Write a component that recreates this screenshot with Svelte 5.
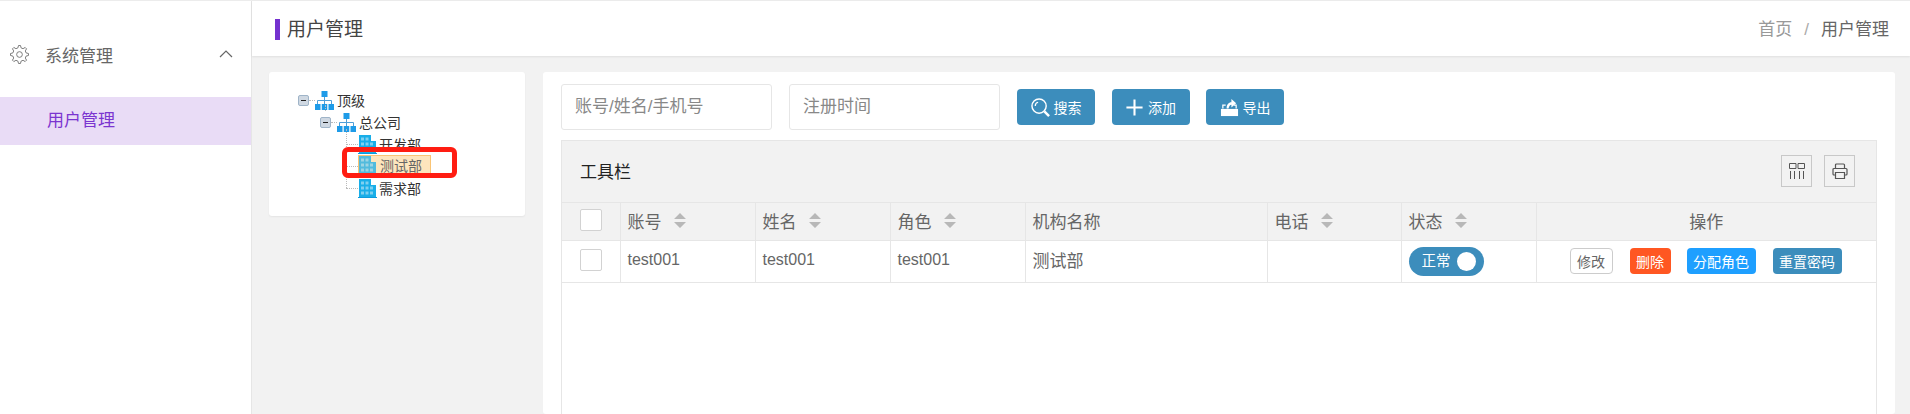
<script>
	const columns = [
		{ label: '账号', value: 'test001', width: 135, sort: true },
		{ label: '姓名', value: 'test001', width: 135, sort: true },
		{ label: '角色', value: 'test001', width: 135, sort: true },
		{ label: '机构名称', value: '测试部', width: 242, sort: false },
		{ label: '电话', value: '', width: 134, sort: true }
	];

	// 8-tooth gear outline, easier to compute than to write by hand
	function gearPath(teeth = 8, outer = 11.4, inner = 8.6) {
		const pts = [];
		const step = (Math.PI * 2) / teeth;
		for (let i = 0; i < teeth; i++) {
			const a = i * step - Math.PI / 2;
			const spread = [
				[a - step * 0.3, inner],
				[a - step * 0.14, outer],
				[a + step * 0.14, outer],
				[a + step * 0.3, inner]
			];
			for (const [ang, r] of spread) {
				pts.push(`${(12 + Math.cos(ang) * r).toFixed(2)} ${(12 + Math.sin(ang) * r).toFixed(2)}`);
			}
		}
		return 'M' + pts.join('L') + 'Z';
	}
</script>

{#snippet orgIcon()}
	<svg class="tree-icon" viewBox="0 0 19 19">
		<rect x="6.500" y="0" width="6" height="6" fill="#1e9be8" />
		<path d="M9.500 6v7M2.500 13v-3.500h14V13" fill="none" stroke="#4f9fd8" stroke-width="1" />
		<rect x="0" y="13" width="5.500" height="6" fill="#1e9be8" />
		<rect x="6.750" y="13" width="5.500" height="6" fill="#1e9be8" />
		<rect x="13.500" y="13" width="5.500" height="6" fill="#1e9be8" />
	</svg>
{/snippet}

{#snippet buildingIcon()}
	<svg class="tree-icon" viewBox="0 0 19 19">
		<path d="M1 18V0h12v6h5v12z" fill="#19aee8" />
		<path d="M0 18.500h19" stroke="#0d9bdc" stroke-width="1" />
		<g fill="#7fd0f0">
			<rect x="3" y="2.500" width="3" height="3" /><rect x="7.500" y="2.500" width="3" height="3" />
			<rect x="3" y="7.500" width="3" height="3" /><rect x="7.500" y="7.500" width="3" height="3" /><rect x="12" y="7.500" width="3" height="3" />
			<rect x="3" y="12.500" width="3" height="3" /><rect x="7.500" y="12.500" width="3" height="3" /><rect x="12" y="12.500" width="3" height="3" />
		</g>
	</svg>
{/snippet}

{#snippet sortArrows()}
	<svg class="sort" viewBox="0 0 12 15"><path d="M6 0l6 6H0zM6 15L0 9h12z" fill="#b8b8b8" /></svg>
{/snippet}

<div class="page">
	<aside class="sidebar">
		<div class="menu-title">
			<svg class="gear" viewBox="0 0 24 24" fill="none" stroke="#777" stroke-width="1.200">
				<path d={gearPath()} />
				<circle cx="12" cy="12" r="3.600" />
			</svg>
			<span>系统管理</span>
			<svg class="chevron" viewBox="0 0 14 8" fill="none" stroke="#666" stroke-width="1.200"><path d="M1 7l6-6 6 6" /></svg>
		</div>
		<div class="menu-item">用户管理</div>
	</aside>

	<div class="right">
		<header class="topbar">
			<h1>用户管理</h1>
			<nav class="crumbs">
				<span class="home">首页</span>
				<span class="sep">/</span>
				<span>用户管理</span>
			</nav>
		</header>

		<div class="content">
			<section class="tree-card">
				<div class="node lv0">
					<i class="toggle"></i><i class="dash"></i>
					{@render orgIcon()}
					<span>顶级</span>
				</div>
				<div class="node lv1">
					<i class="toggle"></i><i class="dash"></i>
					{@render orgIcon()}
					<span>总公司</span>
				</div>
				<div class="node lv2">
					<i class="dash leaf"></i>
					{@render buildingIcon()}
					<span>开发部</span>
				</div>
				<div class="node lv2">
					<i class="dash leaf"></i>
					<div class="selected">
						{@render buildingIcon()}
						<span>测试部</span>
					</div>
				</div>
				<div class="node lv2 last">
					<i class="dash leaf"></i>
					{@render buildingIcon()}
					<span>需求部</span>
				</div>
				<div class="annotation"></div>
			</section>

			<section class="main-card">
				<div class="search-row">
					<input class="field" placeholder="账号/姓名/手机号" />
					<input class="field" placeholder="注册时间" />
					<div class="actions">
						<button class="btn">
							<svg viewBox="0 0 20 20" fill="none" stroke="#fff"><circle cx="8.500" cy="8.500" r="7.500" stroke-width="1.500" /><path d="M4.500 8.500a4 4 0 0 1 3-4" stroke-width="1.300" /><path d="M14 14l5 5" stroke-width="2.600" /></svg>
							搜索
						</button>
						<button class="btn">
							<svg viewBox="0 0 20 20" fill="none" stroke="#fff" stroke-width="2.200"><path d="M10 1.500v17M1.500 10h17" /></svg>
							添加
						</button>
						<button class="btn">
							<svg viewBox="0 0 20 20">
								<path d="M1 11.500h18V19H1z" fill="#fff" />
								<path d="M3 11V7.500h3M17 11V7.500h-2.500" fill="none" stroke="#fff" stroke-width="1.300" />
								<path d="M7 11c0-4 2-6.500 5-6.500V1l5 4.500-5 4.500V7c-1.500 0-2.500 1.500-3 4z" fill="#fff" />
							</svg>
							导出
						</button>
					</div>
				</div>

				<div class="table-box">
					<div class="toolbar">
						<span class="toolbar-title">工具栏</span>
						<div class="tools">
							<div class="tool">
								<svg viewBox="0 0 16 16" fill="none" stroke="#555"><path d="M.5.500h6.500v5H.5zM9 .5h6.500v5H9zM1.500 8v8M5.500 8v8M10.500 8v8M14.500 8v8" /></svg>
							</div>
							<div class="tool">
								<svg viewBox="0 0 16 16" fill="none" stroke="#555" stroke-width="1.200"><path d="M3.500 5V2a1 1 0 0 1 1-1h7a1 1 0 0 1 1 1v3M3.500 12H2a1 1 0 0 1-1-1V6.500a1 1 0 0 1 1-1h12a1 1 0 0 1 1 1V11a1 1 0 0 1-1 1h-1.500M3.500 9.500h9v6h-9z" /></svg>
							</div>
						</div>
					</div>
					<table>
						<colgroup>
							<col style="width: 58px" />
							{#each columns as col}
								<col style="width: {col.width}px" />
							{/each}
							<col style="width: 135px" />
							<col />
						</colgroup>
						<thead>
							<tr>
								<th class="check"><i class="box"></i></th>
								{#each columns as col}
									<th>
										<span class="th-label">{col.label}</span>
										{#if col.sort}{@render sortArrows()}{/if}
									</th>
								{/each}
								<th>
									<span class="th-label">状态</span>
									{@render sortArrows()}
								</th>
								<th class="center">操作</th>
							</tr>
						</thead>
						<tbody>
							<tr>
								<td class="check"><i class="box"></i></td>
								{#each columns as col}
									<td class="text" class:latin={col.sort}>{col.value}</td>
								{/each}
								<td>
									<div class="switch">正常<i class="knob"></i></div>
								</td>
								<td>
									<div class="ops">
										<button class="mini edit">修改</button>
										<button class="mini danger">删除</button>
										<button class="mini info">分配角色</button>
										<button class="mini primary">重置密码</button>
									</div>
								</td>
							</tr>
						</tbody>
					</table>
				</div>
			</section>
		</div>
	</div>
</div>

<style>
	:global(body) {
		margin: 0;
		overflow: hidden;
		background: #f2f2f2;
		font-family: 'Liberation Sans', 'Noto Sans CJK SC', sans-serif;
		color: #666;
	}

	.page {
		display: flex;
		height: 414px;
		border-top: 1px solid #ececec;
		box-sizing: border-box;
	}

	.sidebar {
		width: 251px;
		flex-shrink: 0;
		background: #fff;
		border-right: 1px solid #e6e6e6;
	}

	.menu-title {
		display: flex;
		align-items: center;
		height: 54px;
		margin-top: 26px;
		padding: 0 18px 0 10px;
		font-size: 17px;
		color: #666;
	}

	.gear {
		width: 19px;
		height: 19px;
		margin-right: 16px;
	}

	.chevron {
		width: 14px;
		height: 8px;
		margin-left: auto;
	}

	.menu-item {
		height: 48px;
		margin-top: 16px;
		padding-left: 47px;
		line-height: 47px;
		background: #e9dcf6;
		color: #7b35d0;
		font-size: 17px;
	}

	.right {
		flex: 1;
		min-width: 0;
	}

	.topbar {
		display: flex;
		align-items: center;
		justify-content: space-between;
		height: 55px;
		padding: 2px 21px 0 23px;
		background: #fff;
		box-shadow: 0 1px 2px rgba(0, 0, 0, 0.08);
		box-sizing: border-box;
	}

	h1 {
		margin: 0;
		padding-left: 7px;
		border-left: 5px solid #7431cf;
		font-size: 19px;
		font-weight: 400;
		line-height: 21px;
		color: #444;
	}

	.crumbs {
		display: flex;
		gap: 12px;
		font-size: 17px;
		line-height: 20px;
		color: #666;
	}

	.home {
		color: #999;
	}

	.sep {
		color: #aaa;
	}

	.content {
		display: flex;
		align-items: flex-start;
		gap: 18px;
		padding: 16px 15px 0 17px;
	}

	.tree-card {
		position: relative;
		width: 256px;
		height: 144px;
		padding: 17px 0 0 29px;
		box-sizing: border-box;
		background: #fff;
		border-radius: 3px;
		box-shadow: 0 1px 2px rgba(0, 0, 0, 0.06);
		flex-shrink: 0;
	}

	.node {
		position: relative;
		display: flex;
		align-items: center;
		height: 22px;
		font-size: 14px;
		color: #333;
	}

	.lv1 {
		padding-left: 22px;
	}

	.lv1::before {
		content: '';
		position: absolute;
		left: 27px;
		top: -6px;
		height: 6px;
		border-left: 1px dotted #bbb;
	}

	.lv2 {
		padding-left: 48px;
	}

	/* dotted connector running down the leaf nodes */
	.lv2::before {
		content: '';
		position: absolute;
		left: 48px;
		top: -4px;
		height: 26px;
		border-left: 1px dotted #bbb;
	}

	.lv2.last::before {
		height: 15px;
	}

	.toggle {
		position: relative;
		width: 11px;
		height: 11px;
		background: #cfd8e2;
		border: 1px solid #9fb4c8;
		border-radius: 2px;
		box-sizing: border-box;
	}

	.toggle::after {
		content: '';
		position: absolute;
		left: 2px;
		top: 4px;
		width: 5px;
		height: 1px;
		background: #222;
	}

	.dash {
		width: 6px;
		border-top: 1px dotted #bbb;
	}

	.dash.leaf {
		width: 12px;
		flex-shrink: 0;
	}

	.tree-icon {
		width: 19px;
		height: 19px;
		flex-shrink: 0;
	}

	.node > span {
		margin-left: 3px;
	}

	.lv2 > span {
		margin-left: 2px;
	}

	.selected {
		display: flex;
		align-items: center;
		width: 73px;
		height: 20px;
		margin-top: -2px;
		background: #fde5bd;
		border: 1px solid #fac474;
		box-sizing: border-box;
		color: #666;
	}

	.selected span {
		margin-left: 3px;
	}

	.selected .tree-icon {
		opacity: 0.75;
		margin-left: -1px;
	}

	.annotation {
		position: absolute;
		left: 73px;
		top: 75px;
		width: 115px;
		height: 31px;
		border: 5px solid #ff1d12;
		border-radius: 6px;
		box-sizing: border-box;
	}

	.main-card {
		flex: 1;
		min-width: 0;
		height: 342px;
		padding: 12px 18px 0;
		box-sizing: border-box;
		background: #fff;
		border-radius: 3px;
	}

	.search-row {
		display: flex;
		align-items: center;
		gap: 17px;
		height: 46px;
	}

	.field {
		width: 211px;
		height: 46px;
		padding: 0 13px;
		border: 1px solid #e6e6e6;
		border-radius: 3px;
		box-sizing: border-box;
		font: inherit;
		font-size: 17px;
		outline: none;
	}

	.field::placeholder {
		color: #888;
	}

	.actions {
		display: flex;
		gap: 16.5px;
	}

	.btn {
		display: flex;
		align-items: center;
		justify-content: center;
		gap: 4px;
		width: 78px;
		height: 36px;
		padding: 0;
		border: none;
		border-radius: 4px;
		background: #3c8dbc;
		color: #fff;
		font: inherit;
		font-size: 14px;
	}

	.btn svg {
		width: 19px;
		height: 19px;
	}

	.table-box {
		margin-top: 10px;
		height: 284px;
		border: 1px solid #e6e6e6;
	}

	.toolbar {
		display: flex;
		align-items: center;
		justify-content: space-between;
		height: 62px;
		padding: 0 21px 1px 18px;
		background: #f2f2f2;
		border-bottom: 1px solid #e6e6e6;
		box-sizing: border-box;
	}

	.toolbar-title {
		margin-top: -1px;
		font-size: 17px;
		color: #222;
	}

	.tools {
		display: flex;
		gap: 12px;
	}

	.tool {
		display: flex;
		align-items: center;
		justify-content: center;
		width: 31px;
		height: 32px;
		border: 1px solid #c8c8c8;
		box-sizing: border-box;
	}

	.tool svg {
		width: 16px;
		height: 16px;
	}

	table {
		width: 100%;
		table-layout: fixed;
		border-collapse: collapse;
		font-size: 17px;
	}

	th,
	td {
		height: 37px;
		padding: 0 7px;
		border: 1px solid #e6e6e6;
		border-top: none;
		font-weight: 400;
		text-align: left;
		color: #666;
		box-sizing: border-box;
	}

	th:first-child,
	td:first-child {
		border-left: none;
	}

	th:last-child,
	td:last-child {
		border-right: none;
	}

	th {
		padding-bottom: 2px;
		background: #f2f2f2;
	}

	td {
		height: 42px;
	}

	td.text {
		padding-bottom: 3px;
	}

	td.latin {
		padding-bottom: 2px;
		font-size: 16px;
	}

	th.center {
		text-align: center;
	}

	th.check,
	td.check {
		padding: 0 0 2px 18px;
	}

	.box {
		display: block;
		width: 22px;
		height: 22px;
		background: #fff;
		border: 1px solid #d2d2d2;
		border-radius: 2px;
		box-sizing: border-box;
	}

	.th-label {
		margin-right: 8px;
		vertical-align: middle;
	}

	.sort {
		width: 12px;
		height: 15px;
		vertical-align: middle;
	}

	.switch {
		position: relative;
		width: 75px;
		height: 29px;
		padding-left: 13px;
		line-height: 28px;
		border-radius: 15px;
		background: #3c8dbc;
		color: #fff;
		font-size: 14.5px;
		box-sizing: border-box;
	}

	.knob {
		position: absolute;
		right: 8px;
		top: 5px;
		width: 19px;
		height: 19px;
		border-radius: 50%;
		background: #fff;
	}

	.ops {
		display: flex;
		align-items: center;
		gap: 17px;
		padding-left: 26px;
		white-space: nowrap;
	}

	.mini {
		height: 26px;
		padding: 0 6.500px;
		border: none;
		border-radius: 4px;
		color: #fff;
		font: inherit;
		font-size: 14px;
	}

	.edit {
		background: #fff;
		border: 1px solid #ccc;
		color: #666;
	}

	.danger {
		background: #ff5722;
	}

	.info {
		margin-left: -1px;
		background: #1e9fff;
	}

	.primary {
		background: #3c8dbc;
	}
</style>
